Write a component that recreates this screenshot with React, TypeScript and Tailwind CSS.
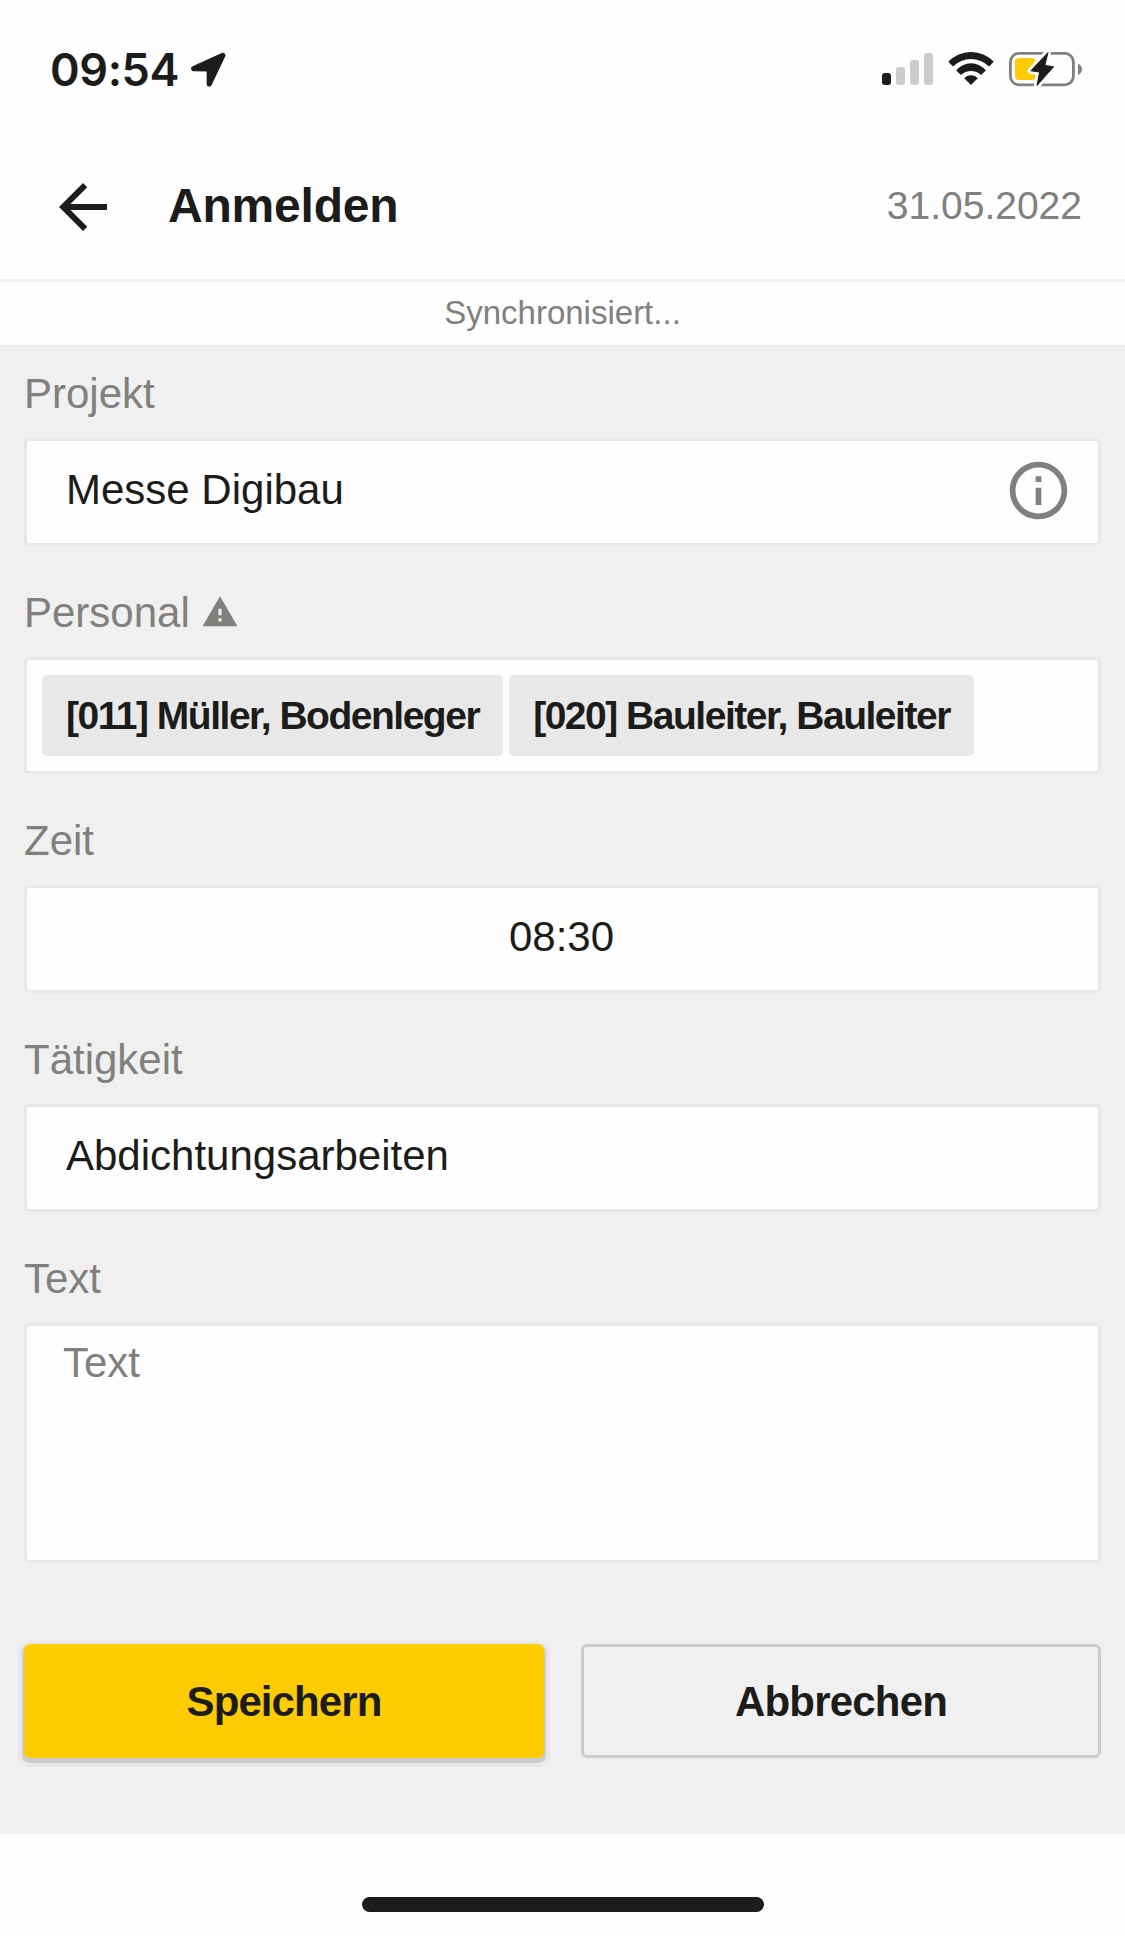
import { useState } from "react";
import type { ReactNode } from "react";
import { MdArrowBack, MdInfoOutline, MdWarning } from "react-icons/md";

const staff = ["[011] Müller, Bodenleger", "[020] Bauleiter, Bauleiter"];

function StatusBar() {
  return (
    <div className="flex h-[137px] items-center justify-between pl-[50px] pr-[43px]">
      <div className="flex items-center">
        <span className="w-[129px] whitespace-nowrap pt-[2px] font-['Inter',sans-serif] text-[45px] font-semibold leading-none tracking-[-0.4px]">
          09:54
        </span>
        <svg className="ml-[11px] mt-[2px] h-[36px] w-[36px]" viewBox="190 52 36 36">
          <path
            d="M222.8 55.4 L193.7 68.6 L209.2 68.9 L209.3 84 Z"
            fill="#1c1c1a"
            stroke="#1c1c1a"
            strokeWidth="5.2"
            strokeLinejoin="round"
          />
        </svg>
      </div>

      <div className="flex items-center gap-[15px]">
        <div className="flex h-[32px] items-end gap-[5px]">
          <span className="h-[12px] w-[9px] rounded-[3px] bg-[#1c1c1a]" />
          <span className="h-[18px] w-[9px] rounded-[3px] bg-[#ccc]" />
          <span className="h-[25px] w-[9px] rounded-[3px] bg-[#ccc]" />
          <span className="h-[32px] w-[9px] rounded-[3px] bg-[#ccc]" />
        </div>

        <svg className="h-[34px] w-[46px]" viewBox="948 52 46 34">
          <g fill="#1c1c1a">
            <path d="M948.3 61.7 A31.4 31.4 0 0 1 993.7 61.7 L989 66.4 A25.8 25.8 0 0 0 953 66.4 Z" />
            <path d="M956.2 70.4 A18.9 18.9 0 0 1 985.8 70.4 L981 75 A14.5 14.5 0 0 0 961 75 Z" />
            <path d="M964.2 78.3 A9 9 0 0 1 977.8 78.3 L971 85 Z" />
          </g>
        </svg>

        <svg className="h-[36px] w-[73px]" viewBox="1009 51 73 36">
          <rect x="1010.4" y="53.4" width="63" height="31.4" rx="8.5" fill="none" stroke="#80807d" strokeWidth="2.8" />
          <path d="M1078 63.7 Q1082 65.5 1082 69.2 Q1082 73 1078 75 Z" fill="#80807d" />
          <rect x="1015" y="58" width="20.5" height="22" rx="4" fill="#ffcc03" />
          <path
            d="M1048 52 L1030.6 70.8 L1039.4 72 L1036.8 86 L1053.6 67 L1044.8 65.6 Z"
            fill="#1c1c1a"
            stroke="#fefefe"
            strokeWidth="6"
            strokeLinejoin="round"
          />
          <path
            d="M1048 52.5 L1030.8 70.8 L1039.6 72 L1037 85.5 L1053.6 66.8 L1044.8 65.4 Z"
            fill="#1c1c1a"
            stroke="#1c1c1a"
            strokeWidth="1"
            strokeLinejoin="round"
          />
        </svg>
      </div>
    </div>
  );
}

function Field({ label, icon, children }: { label: string; icon?: ReactNode; children: ReactNode }) {
  return (
    <div className="flex flex-col">
      <div className="flex h-[111px] items-end pb-[20px] text-[42px] leading-[48px] text-[#80807d]">
        {label}
        {icon}
      </div>
      {children}
    </div>
  );
}

export default function App() {
  const [text, setText] = useState("");

  return (
    <div className="flex h-[1936px] w-[1125px] flex-col bg-[#fefefe] font-['Liberation_Sans',Arial,sans-serif] text-[#1c1c1a]">
      <StatusBar />

      <header className="flex h-[145px] items-center border-b-[3px] border-[#f0f0f0] pb-[5px] pl-[47px] pr-[43px]">
        <button className="mt-[3px]">
          <MdArrowBack size={72} />
        </button>
        <h1 className="ml-[49px] flex-1 text-[48px] font-bold leading-none tracking-[-0.2px]">Anmelden</h1>
        <span className="text-[39px] leading-none text-[#80807d]">31.05.2022</span>
      </header>

      <div className="flex h-[63px] items-center justify-center pb-[2px] text-[33px] leading-none text-[#80807d]">
        Synchronisiert...
      </div>

      <main className="flex h-[1489px] flex-col bg-[#f0f0f0] px-[24px]">
        <div className="-mt-[18px] flex flex-col">
          <Field label="Projekt">
            <div className="flex h-[108px] items-center justify-between rounded-[5px] border-[3px] border-[#e8e8e8] bg-[#fefefe] pl-[39px] pr-[25px]">
              <span className="pb-[5px] text-[42px] leading-[48px]">Messe Digibau</span>
              <MdInfoOutline size={69} className="-mt-[3px] text-[#80807d]" />
            </div>
          </Field>

          <Field label="Personal" icon={<MdWarning size={38} className="mb-[6px] ml-[11px]" />}>
            <div className="flex h-[117px] items-center gap-[6px] rounded-[5px] border-[3px] border-[#e8e8e8] bg-[#fefefe] px-[15px]">
              {staff.map((name) => (
                <span
                  key={name}
                  className="flex h-[81px] items-center whitespace-nowrap rounded-[5px] bg-[#e8e8e8] px-[24px] pt-[2px] text-[39px] font-bold tracking-[-1.48px]"
                >
                  {name}
                </span>
              ))}
            </div>
          </Field>

          <Field label="Zeit">
            <div className="flex h-[108px] items-center justify-center rounded-[5px] border-[3px] border-[#e8e8e8] bg-[#fefefe] pb-[5px] pr-[2px] text-[42px] leading-[48px]">
              08:30
            </div>
          </Field>

          <Field label="Tätigkeit">
            <div className="flex h-[108px] items-center rounded-[5px] border-[3px] border-[#e8e8e8] bg-[#fefefe] pb-[5px] pl-[39px] text-[42px] leading-[48px]">
              Abdichtungsarbeiten
            </div>
          </Field>

          <Field label="Text">
            <textarea
              value={text}
              onChange={(e) => setText(e.target.value)}
              placeholder="Text"
              className="h-[240px] resize-none rounded-[5px] border-[3px] border-[#e8e8e8] bg-[#fefefe] px-[36px] pt-[13px] text-[42px] leading-[48px] outline-none placeholder:text-[#80807d]"
            />
          </Field>
        </div>

        <div className="mt-[81px] grid grid-cols-2 gap-[37px] text-[42px] font-bold leading-[48px]">
          <button className="h-[114px] rounded-[6px] bg-[#ffcc03] pt-[2px] tracking-[-0.9px] shadow-[0_3px_0_2px_#cccccc,0_3px_0_6px_#e8e8e8]">
            Speichern
          </button>
          <button className="h-[114px] rounded-[6px] border-[3px] border-[#ccc] pt-[2px] tracking-[-0.8px]">
            Abbrechen
          </button>
        </div>
      </main>

      <div className="flex flex-1 items-end justify-center pb-[24px]">
        <div className="h-[15px] w-[402px] rounded-full bg-[#1c1c1a]" />
      </div>
    </div>
  );
}
